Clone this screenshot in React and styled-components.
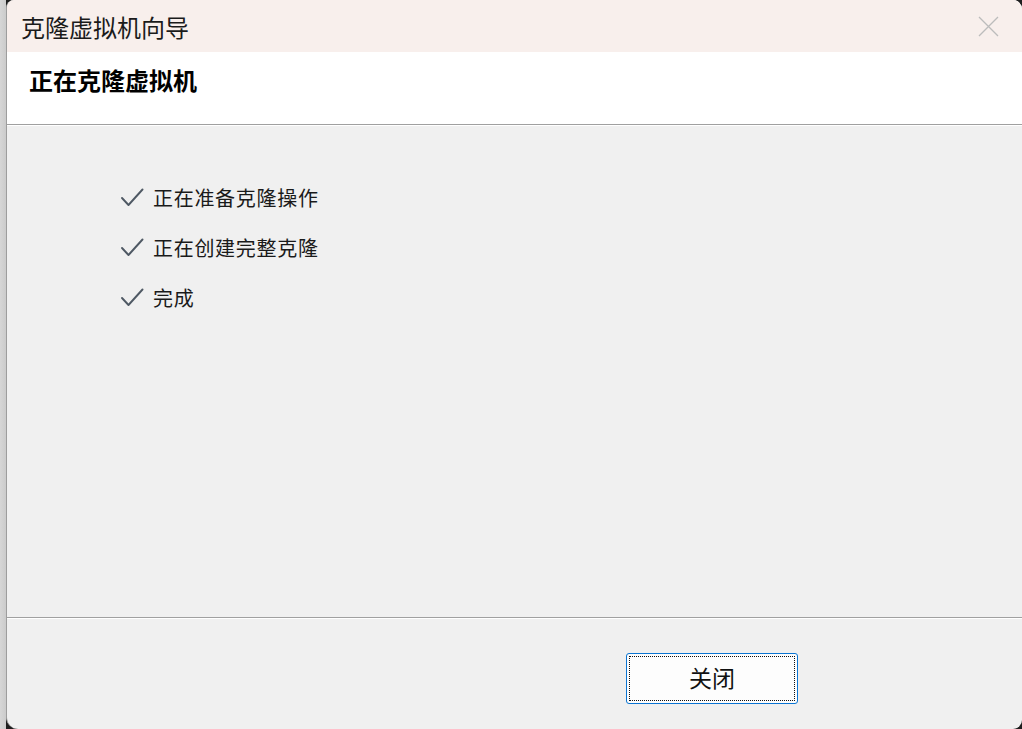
import React from "react";
import styled, { createGlobalStyle } from "styled-components";

const GlobalStyle = createGlobalStyle`
  html, body {
    margin: 0;
    padding: 0;
    background: #1e1e1e;
    overflow: hidden;
  }
`;

const Screen = styled.div`
  display: flex;
  height: 729px;
  width: 1022px;
`;

const Desktop = styled.div`
  width: 6px;
  background: linear-gradient(to right, #d6d6d6, #cbcbcb);
`;

const Window = styled.div`
  flex: 1;
  display: flex;
  flex-direction: column;
  background: #f0f0f0;
  border-left: 1px solid #9d9d9d;
  border-radius: 8px 9px 9px 12px;
  overflow: hidden;
  font-family: "Noto Sans CJK SC", "Liberation Sans", sans-serif;
`;

const TitleBar = styled.div`
  height: 52px;
  flex: none;
  display: flex;
  align-items: center;
  justify-content: space-between;
  padding: 0 23px 0 14px;
  background: #f8efec;
  color: #1b1b1b;
  font-size: 24px;
`;

const CloseButton = styled.div`
  width: 22px;
  height: 22px;
  display: flex;
  align-items: center;
  justify-content: center;
`;

const Header = styled.div`
  height: 72px;
  flex: none;
  box-sizing: border-box;
  padding: 12px 0 0 22px;
  background: #ffffff;
`;

const HeaderTitle = styled.h1`
  margin: 0;
  font-size: 24px;
  line-height: 32px;
  font-weight: bold;
  color: #000;
`;

const Divider = styled.div`
  flex: none;
  height: 1px;
  background: #a0a0a0;
  border-bottom: 1px solid #ffffff;
`;

const Body = styled.div`
  flex: 1;
  padding: 46px 0 0 114px;
`;

const StepRow = styled.div`
  height: 50px;
  display: flex;
  align-items: center;
  gap: 9px;
`;

const StepText = styled.span`
  font-family: "Liberation Serif", "Noto Sans CJK SC", serif;
  font-size: 20px;
  letter-spacing: 0.7px;
  color: #1a1a1a;
`;

const Footer = styled.div`
  height: 110px;
  flex: none;
  box-sizing: border-box;
  padding: 34px 0 0 619px;
`;

const Button = styled.button`
  width: 172px;
  height: 51px;
  padding: 2px;
  border: 1px solid #0a74d2;
  border-radius: 3px;
  background: #fdfdfd;
  cursor: pointer;
  display: flex;
`;

const FocusRect = styled.span`
  flex: 1;
  display: flex;
  align-items: center;
  justify-content: center;
  padding-bottom: 4px;
  border: 1px dotted #111;
  font-family: "Noto Sans CJK SC", sans-serif;
  font-size: 23px;
  color: #111;
`;

const CheckIcon = () => (
  <svg width="23" height="20" viewBox="0 0 23 20">
    <path
      d="M1 11 L7.5 18 L21.5 2.5"
      fill="none"
      stroke="#4f5964"
      strokeWidth="1.9"
      strokeLinecap="round"
      strokeLinejoin="round"
    />
  </svg>
);

const steps = ["正在准备克隆操作", "正在创建完整克隆", "完成"];

const App = () => (
  <>
    <GlobalStyle />
    <Screen>
      <Desktop />
      <Window>
        <TitleBar>
          <span>克隆虚拟机向导</span>
          <CloseButton>
            <svg width="21" height="21" viewBox="0 0 21 21">
              <path d="M1 1 L20 20 M20 1 L1 20" stroke="#bcbcbc" strokeWidth="1.3" />
            </svg>
          </CloseButton>
        </TitleBar>
        <Header>
          <HeaderTitle>正在克隆虚拟机</HeaderTitle>
        </Header>
        <Divider />
        <Body>
          {steps.map((s) => (
            <StepRow key={s}>
              <CheckIcon />
              <StepText>{s}</StepText>
            </StepRow>
          ))}
        </Body>
        <Divider />
        <Footer>
          <Button>
            <FocusRect>关闭</FocusRect>
          </Button>
        </Footer>
      </Window>
    </Screen>
  </>
);

export default App;
